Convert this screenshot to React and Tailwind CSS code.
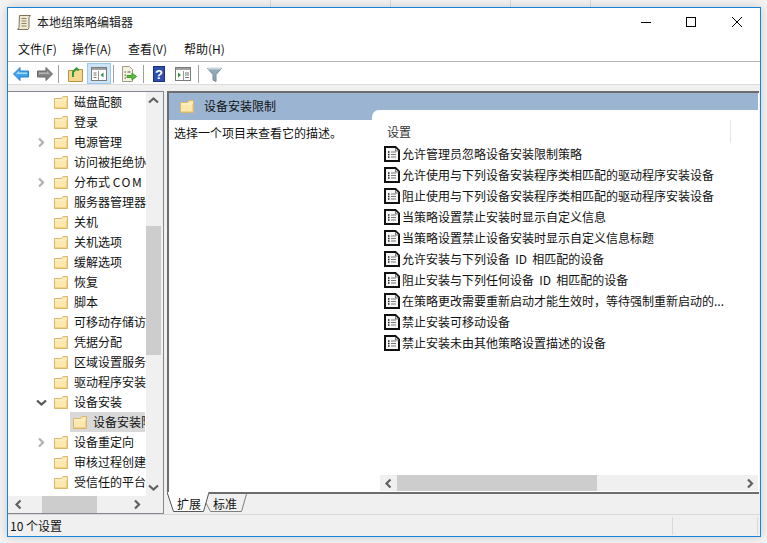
import React from "react";

function Folder({ className = "" }) {
  return (
    <svg width="16" height="15" viewBox="0 0 16 15" className={`shrink-0 ${className}`}>
      <path d="M1.500 3.500h7l1.500-2h4.500v12h-13z" fill="#fce8ac" stroke="#d9b76c" />
      <path d="M2 4.500h12v1H2z" fill="#fff5d6" />
      <path d="M13 5h1v8h-1zM2 12h12v1H2z" fill="#f2d184" />
    </svg>
  );
}

function Chevron({ dir, color = "#b0b0b0" }) {
  const d =
    dir === "right"
      ? "M3 1.500 L7 5.500 L3 9.500"
      : dir === "left"
      ? "M7.500 1.500 L3.500 5.500 L7.500 9.500"
      : dir === "up"
      ? "M1 7.500 L5.500 3.500 L10 7.500"
      : "M1 3.500 L5.500 7.500 L10 3.500";
  return (
    <svg width="11" height="11" viewBox="0 0 11 11" className="shrink-0">
      <path d={d} fill="none" stroke={color} strokeWidth="2.2" />
    </svg>
  );
}

function PolicyIcon() {
  return (
    <svg width="16" height="16" viewBox="0 0 16 16" className="shrink-0">
      <path d="M1 1h10.500l3.500 3.500V15H1z" fill="#f7f7f7" stroke="#111" strokeWidth="2" />
      <path d="M11.500 2v3h3" fill="#ddd" stroke="#777" />
      <path d="M4 6h1.500M4 8.500h1.500M4 11h1.500" stroke="#222" strokeWidth="1.300" />
      <path d="M7 6h5M7 8.500h5M7 11h5" stroke="#777" strokeWidth="1" />
    </svg>
  );
}

const tree = [
  ["磁盘配额", null],
  ["登录", null],
  ["电源管理", "right"],
  ["访问被拒绝协", null],
  ["分布式 COM", "right"],
  ["服务器管理器", null],
  ["关机", null],
  ["关机选项", null],
  ["缓解选项", null],
  ["恢复", null],
  ["脚本", null],
  ["可移动存储访", null],
  ["凭据分配", null],
  ["区域设置服务", null],
  ["驱动程序安装", null],
  ["设备安装", "down"],
  ["__sel", null],
  ["设备重定向", "right"],
  ["审核过程创建", null],
  ["受信任的平台", null],
];

const rows = [
  "允许管理员忽略设备安装限制策略",
  "允许使用与下列设备安装程序类相匹配的驱动程序安装设备",
  "阻止使用与下列设备安装程序类相匹配的驱动程序安装设备",
  "当策略设置禁止安装时显示自定义信息",
  "当策略设置禁止设备安装时显示自定义信息标题",
  "允许安装与下列设备 ID 相匹配的设备",
  "阻止安装与下列任何设备 ID 相匹配的设备",
  "在策略更改需要重新启动才能生效时，等待强制重新启动的...",
  "禁止安装可移动设备",
  "禁止安装未由其他策略设置描述的设备",
];

function ToolSep({ className = "" }) {
  return <div className={`w-px h-[18px] bg-[#a0a0a0] shrink-0 ${className}`} />;
}

function Arrow({ flip, fill, stroke, hi }) {
  return (
    <svg width="16" height="14" viewBox="0 0 16 14" className="shrink-0" style={flip ? { transform: "scaleX(-1)" } : undefined}>
      <path d="M0.500 7L7 0.500V4h8.500v6H7v3.500z" fill={fill} stroke={stroke} />
      <path d="M3 7l3-3v1.500h8V7H6z" fill={hi} />
    </svg>
  );
}

function PaneIcon({ right, className = "" }) {
  return (
    <svg width="16" height="14" viewBox="0 0 16 14" className={`shrink-0 ${className}`}>
      <rect x="0.500" y="0.500" width="15" height="13" fill="#fff" stroke="#7a7a7a" />
      <rect x="1" y="1" width="14" height="2" fill="#a0a0a0" />
      {right ? (
        <>
          <path d="M3 5.500l3 2.500-3 2.500z" fill="#2f9a3a" />
          <path d="M10 6h4M10 8h4M10 10.500h4" stroke="#777" />
          <path d="M8.500 4v9" stroke="#999" />
        </>
      ) : (
        <>
          <path d="M2.500 6h3M2.500 8h3M2.500 10.500h3" stroke="#777" />
          <path d="M12.500 5.500l-3 2.500 3 2.500z" fill="#2f9a3a" />
          <path d="M7.500 4v9" stroke="#999" />
        </>
      )}
    </svg>
  );
}

function TreeLabel({ name }) {
  if (name.includes("COM")) {
    return (
      <span className="ml-[5px]">
        分布式 <span className="tracking-[1.500px]">COM</span>
      </span>
    );
  }
  return <span className="ml-[5px]">{name}</span>;
}

export default function App() {
  return (
    <div
      className="relative w-[767px] h-[543px] overflow-hidden bg-[#f4f4f4] pt-[7px] pl-[7px] text-[12px] text-[#111]"
      style={{ fontFamily: '"Noto Sans CJK SC", "Noto Sans", sans-serif' }}
    >
      <div className="absolute top-0 left-[270px] w-px h-[7px] bg-[#dcdcdc]" />
      <div className="absolute top-0 left-[390px] w-px h-[7px] bg-[#dcdcdc]" />
      <div className="absolute top-0 left-[510px] w-px h-[7px] bg-[#dcdcdc]" />
      <div className="absolute top-0 left-[590px] w-px h-[7px] bg-[#dcdcdc]" />
      <div className="relative w-[754px] h-[530px] border border-[#1583d8] bg-white flex flex-col shadow-[0_0_10px_rgba(0,0,0,0.18)]">
        {/* title bar */}
        <div className="h-[30px] flex items-center shrink-0">
          <svg width="16" height="17" viewBox="0 0 16 17" className="ml-[8px] -mt-[1px]">
            <path d="M3.500 1.500h11l-1.500 2v10l-1 2H1.500l1.500-2z" fill="#f1ead2" stroke="#7d7458" />
            <path d="M5.500 4.500h5M5.500 7h5M5.500 9.500h5M5.500 12h5" stroke="#8a8266" />
          </svg>
          <span className="ml-[5px] text-[12px] text-[#222] pb-[2px]">本地组策略编辑器</span>
          <div className="ml-auto flex items-center">
            <svg width="46" height="30" viewBox="0 0 46 30"><path d="M19 14.500h10" stroke="#000" /></svg>
            <svg width="46" height="30" viewBox="0 0 46 30"><rect x="18.500" y="9.500" width="9" height="9" fill="none" stroke="#000" /></svg>
            <svg width="46" height="30" viewBox="0 0 46 30"><path d="M18 9l10 10M28 9L18 19" stroke="#000" /></svg>
          </div>
        </div>
        {/* menu */}
        <div className="h-[24px] flex items-center shrink-0 border-b border-[#b4b4bc] pl-[10px] pb-[1px] text-[12px]">
          <span className="w-[54px]">文件(F)</span>
          <span className="w-[56px]">操作(A)</span>
          <span className="w-[56px]">查看(V)</span>
          <span>帮助(H)</span>
        </div>
        {/* toolbar */}
        <div className="h-[23px] flex items-center shrink-0 border-b border-[#dcdcdc] pl-[5px] pt-[2px]">
          <Arrow fill="#3fa4ec" stroke="#2a80cc" hi="#a9dbfa" />
          <div className="w-[8px]" />
          <Arrow flip fill="#858585" stroke="#666" hi="#b5b5b5" />
          <ToolSep className="ml-[5px]" />
          <svg width="15" height="16" viewBox="0 0 15 16" className="ml-[9px] shrink-0">
            <path d="M0.500 4.500h5l1-1h8v12H0.500z" fill="#f5d88f" stroke="#b8923f" />
            <path d="M5 11V6l3-3 3 1M8 1.500l2 3" fill="none" stroke="#2f9a3a" strokeWidth="2" />
          </svg>
          <div className="ml-[4px] w-[24px] h-[21px] -mt-[1px] flex items-center justify-center bg-[#cce4f7] border border-[#99c9ef] shrink-0">
            <PaneIcon />
          </div>
          <ToolSep className="ml-[2px]" />
          <svg width="16" height="16" viewBox="0 0 16 16" className="ml-[7px] shrink-0">
            <path d="M1.500 0.500h7l3 3v12h-10z" fill="#f6f1dc" stroke="#9c9c8c" />
            <path d="M3.500 6h1.500M3.500 9h1.500M3.500 12h1.500M6.500 6h3" stroke="#555" />
            <path d="M6 9.500h5V7l4.500 3.500L11 14v-2.500H6z" fill="#5cbf3f" stroke="#3d9a2a" />
          </svg>
          <ToolSep className="ml-[6px]" />
          <div
            className="ml-[9px] w-[12px] h-[16px] bg-[#2f4fb0] border border-[#1c2f7a] flex items-center justify-center text-white text-[13px] font-bold leading-none shrink-0"
            style={{ fontFamily: '"Liberation Sans", sans-serif' }}
          >
            ?
          </div>
          <PaneIcon right className="ml-[10px]" />
          <ToolSep className="ml-[7px]" />
          <svg width="15" height="15" viewBox="0 0 15 15" className="ml-[8px] shrink-0">
            <path d="M0.500 1.500h14L9 7.500v7l-3-1.500V7.500z" fill="#93a9b9" stroke="#71889a" />
            <path d="M1 1.500h13" stroke="#c7d6e0" strokeWidth="2" />
          </svg>
        </div>
        {/* body */}
        <div className="flex-1 min-h-0 bg-[#f0f0f0] flex pt-[6px] pr-[1px] gap-[3px]">
          {/* tree */}
          <div className="w-[156px] h-[423px] border-t border-r border-b border-[#828790] bg-white flex flex-col shrink-0">
            <div className="flex-1 min-h-0 flex">
              <div className="w-[138px] overflow-hidden">
                {tree.map(([name, exp], i) =>
                  name === "__sel" ? (
                    <div key={i} className="h-[20px] flex items-center pl-[62px]">
                      <div className="flex items-center h-[20px] w-[75px] bg-[#d9d9d9] pl-[2px] overflow-hidden whitespace-nowrap">
                        <Folder />
                        <span className="ml-[5px]">设备安装限制</span>
                      </div>
                    </div>
                  ) : (
                    <div key={i} className="h-[20px] flex items-center whitespace-nowrap overflow-hidden">
                      <div className="w-[11px] ml-[28px] shrink-0">
                        {exp && <Chevron dir={exp} color={exp === "down" ? "#555" : "#b0b0b0"} />}
                      </div>
                      <Folder className="ml-[6px]" />
                      <TreeLabel name={name} />
                    </div>
                  )
                )}
              </div>
              <div className="w-[17px] bg-[#f0f0f0] flex flex-col">
                <div className="w-[15px] h-[17px] flex items-center justify-center"><Chevron dir="up" color="#606060" /></div>
                <div className="mt-[117px] w-[15px] h-[129px] bg-[#cdcdcd]" />
                <div className="mt-auto w-[15px] h-[17px] flex items-center justify-center"><Chevron dir="down" color="#606060" /></div>
              </div>
            </div>
            <div className="h-[17px] bg-[#f0f0f0] flex items-center shrink-0">
              <div className="w-[17px] flex justify-center ml-[2px]"><Chevron dir="left" color="#606060" /></div>
              <div className="ml-[15px] w-[55px] h-[17px] bg-[#cdcdcd]" />
              <div className="ml-auto mr-[20px]"><Chevron dir="right" color="#606060" /></div>
            </div>
          </div>
          {/* right */}
          <div className="flex-1 min-w-0 flex flex-col">
            <div className="h-[403px] shrink-0 border-t-2 border-l-2 border-b-2 border-[#6d6d6d] bg-white flex pr-[1px]">
              <div className="w-[203px] shrink-0 flex flex-col">
                <div className="h-[27px] bg-[#9ab4d2] flex items-start shrink-0">
                  <div className="h-[26px] flex items-center">
                    <Folder className="ml-[10px]" />
                    <span className="ml-[9px]">设备安装限制</span>
                  </div>
                </div>
                <div className="pl-[5px] pt-[5px] leading-[16px]">选择一个项目来查看它的描述。</div>
              </div>
              <div className="flex-1 min-w-0 flex flex-col bg-[linear-gradient(#9ab4d2_27px,#ffffff_27px)]">
                <div className="h-[17px] shrink-0" />
                <div className="flex-1 min-h-0 bg-white rounded-tl-[7px] flex flex-col pt-[10px]">
                  <div className="h-[23px] pl-[15px] flex items-center text-[#333] shrink-0 relative">
                    设置
                    <div className="absolute right-[27px] top-0 w-px h-[23px] bg-[#e5e5e5]" />
                  </div>
                  <div className="flex-1 min-h-0 pl-[12px]">
                    {rows.map((r) => (
                      <div key={r} className="h-[21px] flex items-center whitespace-nowrap [word-spacing:2.500px]">
                        <PolicyIcon />
                        <span className="ml-[2px]">{r}</span>
                      </div>
                    ))}
                  </div>
                  <div className="h-[16px] mb-[1px] ml-[8px] bg-[#f0f0f0] shrink-0 flex items-center">
                    <div className="w-[17px] flex justify-center"><Chevron dir="left" color="#606060" /></div>
                    <div className="w-[200px] h-[16px] bg-[#cdcdcd]" />
                    <div className="ml-auto mr-[2px]"><Chevron dir="right" color="#606060" /></div>
                  </div>
                </div>
              </div>
            </div>
            {/* tabs */}
            <div className="relative flex-1 flex items-center pl-[10px] gap-[12px]">
              <svg width="85" height="22" viewBox="0 0 85 22" className="absolute left-0 -top-[2px]">
                <path d="M39 11L43.500 19.500H74.500L79.500 2" fill="#f0f0f0" stroke="#808080" />
                <path d="M0 0L6.500 19.500H36.500L41.500 0z" fill="#fff" />
                <path d="M0 0L6.500 19.500H36.500L41.500 2" fill="none" stroke="#555" />
              </svg>
              <span className="relative">扩展</span>
              <span className="relative">标准</span>
            </div>
          </div>
        </div>
        {/* status */}
        <div className="h-[22px] shrink-0 bg-[#f0f0f0] border-t border-[#d9d9d9] flex items-center pl-[2px]">
          <span>10 个设置</span>
          <div className="ml-auto w-px h-[18px] bg-[#d9d9d9] mr-[84px]" />
          <div className="w-px h-[18px] bg-[#d9d9d9] mr-[2px]" />
        </div>
      </div>
    </div>
  );
}
